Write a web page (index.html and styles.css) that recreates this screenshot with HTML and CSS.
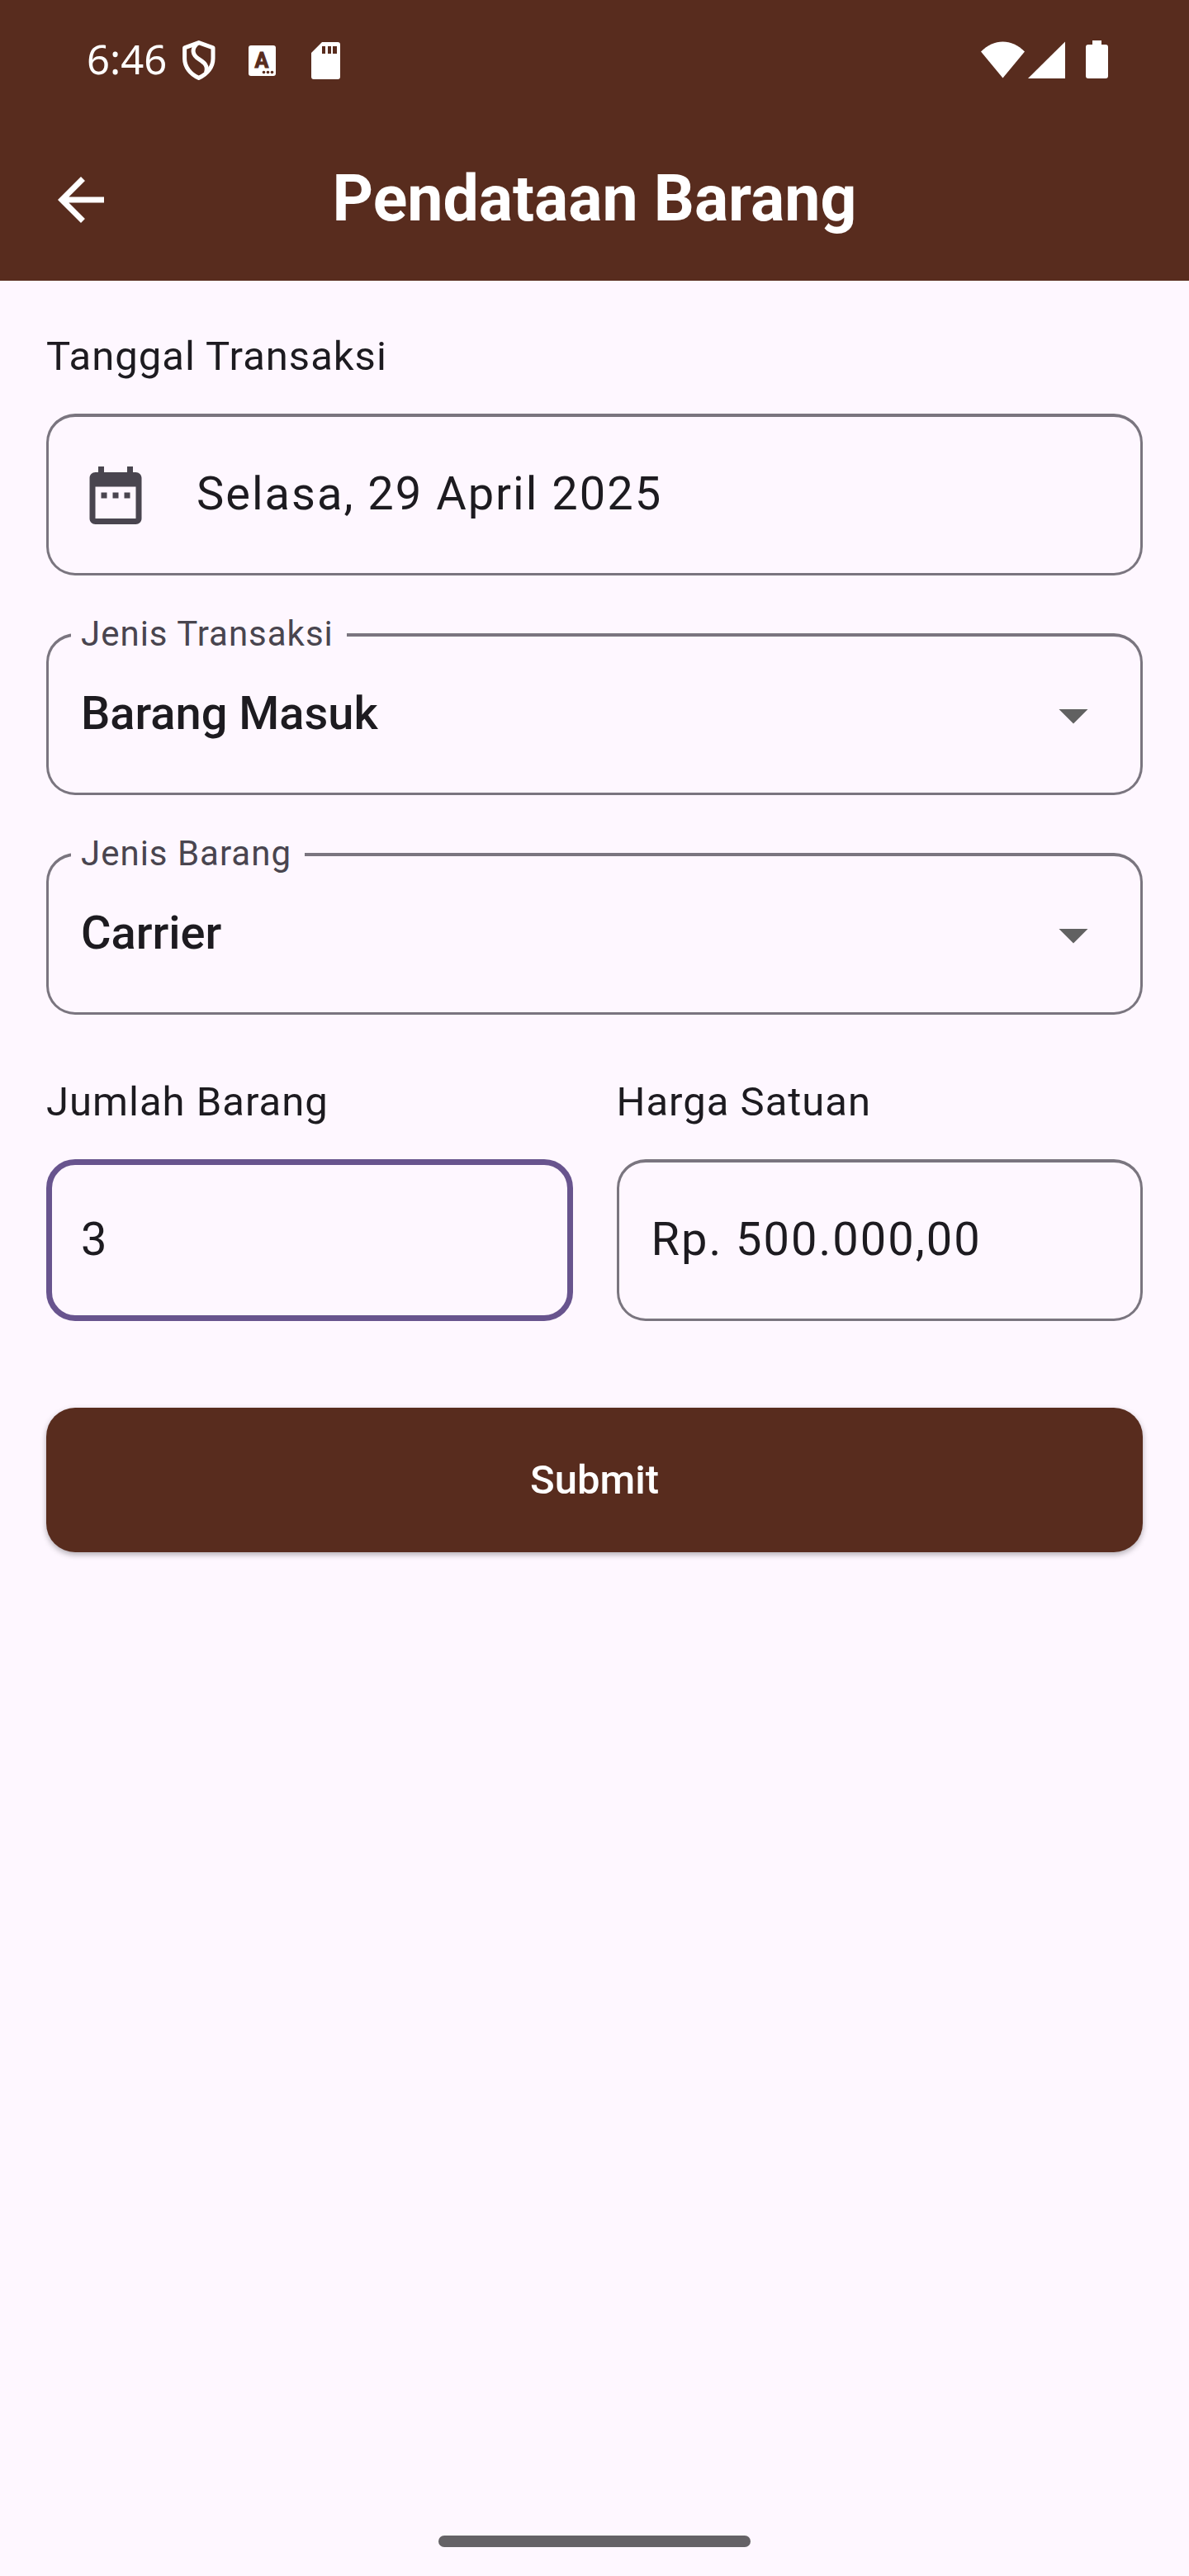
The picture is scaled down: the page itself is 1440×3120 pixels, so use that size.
FILE: index.html
```html
<!DOCTYPE html>
<html lang="id">
<head>
  <meta charset="utf-8">
  <meta name="viewport" content="width=device-width, initial-scale=1">
  <title>Pendataan Barang</title>
  <link rel="stylesheet" href="styles.css">
</head>
<body>
  <header class="header">
    <div class="status">
      <span class="status-time">6:46</span>
      <div class="status-apps">
        <svg width="50" height="50" viewBox="0 0 50 50" fill="none" stroke="currentColor" stroke-width="5" aria-hidden="true">
          <path d="M24.7 4.6 42 10.8V24C42 34 35 43 24.7 47.4 14.4 43 7.6 34 7.6 24V10.8Z" stroke-linejoin="round"/>
          <path d="M24 5C17 10 16 17 22 22.500 28 27.500 37 30 33.500 41"/>
        </svg>
        <svg width="50" height="50" viewBox="0 0 50 50" aria-hidden="true">
          <rect x="8" y="8" width="33" height="37" rx="3" fill="currentColor"/>
          <text x="24" y="35" class="status-letter">A</text>
          <g class="status-cut">
            <circle cx="26.500" cy="40.500" r="1.800"/>
            <circle cx="31.500" cy="40.500" r="1.800"/>
            <circle cx="36.500" cy="40.500" r="1.800"/>
          </g>
        </svg>
        <svg width="50" height="50" viewBox="0 0 50 50" fill="currentColor" fill-rule="evenodd" aria-hidden="true">
          <path d="M20 4H39Q42 4 42 7V46Q42 49 39 49H10Q7 49 7 46V17ZM20 9V18H24V9ZM27 9V18H31V9ZM33 9V18H38V9Z"/>
        </svg>
      </div>
      <div class="status-system">
        <svg width="53" height="50" viewBox="0 0 53 50" fill="currentColor" aria-hidden="true">
          <path d="M0 15.500C8 7.500 17 3.500 26.500 3.500S45 7.500 53 15.500L26.500 47.500Z"/>
        </svg>
        <svg width="45" height="50" viewBox="0 0 45 50" fill="currentColor" aria-hidden="true">
          <path d="M0 48 45 3.500V48Z"/>
        </svg>
        <svg class="status-battery" width="27" height="50" viewBox="0 0 27 50" fill="currentColor" aria-hidden="true">
          <path d="M8 2H19V7H24Q27 7 27 10V45Q27 48 24 48H3Q0 48 0 45V10Q0 7 3 7H8Z"/>
        </svg>
      </div>
    </div>
    <div class="appbar">
      <button class="back" type="button" aria-label="Kembali">
        <svg width="84" height="84" viewBox="0 0 24 24" fill="currentColor" aria-hidden="true">
          <path d="M20 11H7.830l5.590-5.590L12 4l-8 8 8 8 1.410-1.410L7.830 13H20v-2z"/>
        </svg>
      </button>
      <h1 class="title">Pendataan Barang</h1>
    </div>
  </header>

  <main class="content">
    <form class="form">
      <div class="group">
        <label class="label" for="tanggal">Tanggal Transaksi</label>
        <div class="field">
          <svg class="calendar" width="84" height="84" viewBox="0 0 24 24" fill="currentColor" aria-hidden="true">
            <path d="M9 11H7v2h2v-2zm4 0h-2v2h2v-2zm4 0h-2v2h2v-2zm2-7h-1V2h-2v2H8V2H6v2H5c-1.110 0-1.990.900-1.990 2L3 20c0 1.100.890 2 2 2h14c1.100 0 2-.900 2-2V6c0-1.100-.900-2-2-2zm0 16H5V9h14v11z"/>
          </svg>
          <input class="control" id="tanggal" type="text" value="Selasa, 29 April 2025" readonly>
        </div>
      </div>

      <div class="field">
        <label class="floating" for="jenis-transaksi">Jenis Transaksi</label>
        <select class="control control-select" id="jenis-transaksi">
          <option selected>Barang Masuk</option>
          <option>Barang Keluar</option>
        </select>
        <svg class="arrow" width="84" height="84" viewBox="0 0 24 24" fill="currentColor" aria-hidden="true"><path d="M7 10l5 5 5-5z"/></svg>
      </div>

      <div class="field">
        <label class="floating" for="jenis-barang">Jenis Barang</label>
        <select class="control control-select" id="jenis-barang">
          <option selected>Carrier</option>
        </select>
        <svg class="arrow" width="84" height="84" viewBox="0 0 24 24" fill="currentColor" aria-hidden="true"><path d="M7 10l5 5 5-5z"/></svg>
      </div>

      <div class="pair">
        <div class="group">
          <label class="label" for="jumlah">Jumlah Barang</label>
          <div class="field field-active">
            <input class="control" id="jumlah" type="text" inputmode="numeric" value="3">
          </div>
        </div>
        <div class="group">
          <label class="label" for="harga">Harga Satuan</label>
          <div class="field">
            <input class="control" id="harga" type="text" inputmode="decimal" value="Rp. 500.000,00">
          </div>
        </div>
      </div>

      <button class="submit" type="submit">Submit</button>
    </form>
  </main>

  <div class="gesture"></div>
</body>
</html>
```
FILE: styles.css
```css
:root {
  --brown: #582c1e;
  --surface: #fef7ff;
  --ink: #1d1b20;
  --ink-soft: #49454f;
  --outline: #7a757f;
  --primary: #68548e;
}

* {
  box-sizing: border-box;
}

body {
  display: flex;
  flex-direction: column;
  min-height: 100vh;
  margin: 0;
  background: var(--surface);
  color: var(--ink);
  font-family: Roboto, "Liberation Sans", sans-serif;
}

svg {
  display: block;
  flex: none;
}

/* Header */
.header {
  background: var(--brown);
  color: #fff;
}

.status {
  display: flex;
  align-items: center;
  height: 144px;
  padding: 0 98px 0 105px;
}

.status-time {
  padding-bottom: 2px;
  font: 400 49px/70px "Noto Sans", "Open Sans", sans-serif;
}

.status-apps {
  display: flex;
  gap: 27px;
  margin-left: 14px;
}

.status-letter {
  fill: var(--brown);
  stroke: var(--brown);
  stroke-width: 1;
  font: 700 25px Roboto, sans-serif;
  text-anchor: middle;
}

.status-cut {
  fill: var(--brown);
}

.status-system {
  display: flex;
  gap: 4px;
  margin-left: auto;
}

.status-battery {
  margin-left: 21px;
}

.appbar {
  display: grid;
  grid-template-columns: 84px 1fr 84px;
  align-items: center;
  height: 196px;
  padding: 0 56px;
}

.back {
  padding: 0;
  border: 0;
  background: none;
  color: inherit;
}

.title {
  margin: 0;
  padding-bottom: 2px;
  font-size: 77px;
  line-height: 98px;
  font-weight: 700;
  text-align: center;
}

/* Form */
.content {
  flex: 1;
  padding: 56px;
}

.form {
  display: flex;
  flex-direction: column;
  gap: 70px;
}

.group {
  display: flex;
  flex-direction: column;
  gap: 33px;
  min-width: 0;
}

.label {
  font-size: 49px;
  line-height: 72px;
  letter-spacing: 1px;
}

.field {
  position: relative;
  display: flex;
  align-items: center;
  height: 196px;
  padding: 0 39px;
  border: 3px solid var(--outline);
  border-top-width: 4px;
  border-radius: 35px;
}

.field-active {
  padding: 0 35px;
  border: 7px solid var(--primary);
}

.control {
  flex: 1;
  min-width: 0;
  height: 84px;
  padding: 0 0 3px;
  border: 0;
  outline: 0;
  background: none;
  color: inherit;
  font-family: inherit;
  font-size: 56px;
  letter-spacing: 2px;
}

.control-select {
  appearance: none;
  font-weight: 500;
  letter-spacing: 0;
}

.calendar {
  margin-right: 56px;
  color: var(--ink-soft);
}

.floating {
  position: absolute;
  top: -31px;
  left: 27px;
  padding: 0 16px 0 12px;
  background: var(--surface);
  color: var(--ink-soft);
  font-size: 42px;
  line-height: 56px;
  letter-spacing: 1px;
}

.arrow {
  color: #616161;
  pointer-events: none;
}

.pair {
  display: grid;
  grid-template-columns: minmax(0, 1fr) minmax(0, 1fr);
  gap: 53px;
}

.submit {
  height: 175px;
  margin-top: 35px;
  border: 0;
  border-radius: 35px;
  background: var(--brown);
  color: #fff;
  font: 500 49px/70px Roboto, "Liberation Sans", sans-serif;
  box-shadow: 0 3px 7px rgba(0, 0, 0, 0.3);
}

/* System gesture handle */
.gesture {
  align-self: center;
  width: 378px;
  height: 14px;
  margin-bottom: 35px;
  border-radius: 7px;
  background: #656266;
}
```
